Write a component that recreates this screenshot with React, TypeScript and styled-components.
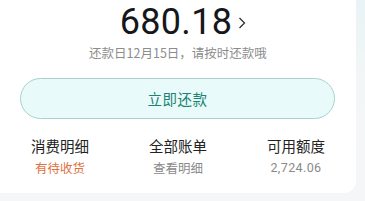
import styled, { createGlobalStyle } from 'styled-components';

const GlobalStyle = createGlobalStyle`
  html, body {
    margin: 0;
    padding: 0;
    background: linear-gradient(180deg, #e9f3f5 0%, #f3f6f7 40%, #f5f6f7 100%);
    font-family: "Noto Sans CJK SC", "Noto Sans", sans-serif;
  }
`;

const Page = styled.div`
  width: 365px;
  height: 201px;
  overflow: hidden;
`;

const Card = styled.div`
  width: 356px;
  height: 193px;
  background: #ffffff;
  border-radius: 0 0 12px 0;
  display: flex;
  flex-direction: column;
  align-items: center;
`;

const AmountRow = styled.div`
  display: flex;
  align-items: center;
  gap: 6px;
  margin-top: 2px;
  margin-left: 10px;
`;

const Amount = styled.span`
  font-family: Roboto, "Liberation Sans", sans-serif;
  font-size: 36px;
  line-height: 40px;
  font-weight: 400;
  color: #16171b;
  letter-spacing: 0.3px;
`;

const Due = styled.div`
  margin-top: 2px;
  font-size: 12.5px;
  line-height: 18px;
  color: #8c8c8c;
`;

const PayButton = styled.button`
  margin-top: 16px;
  width: 315px;
  height: 41px;
  margin-left: -1px;
  border-radius: 21px;
  border: 1px solid #a9d2cd;
  background: #e9fafa;
  color: #1a8472;
  font-family: "Noto Sans CJK SC", sans-serif;
  font-size: 14.5px;
  letter-spacing: 0.5px;
  padding: 0;
`;

const Stats = styled.div`
  margin-top: 17px;
  width: 354px;
  display: grid;
  grid-template-columns: repeat(3, 1fr);
`;

const Stat = styled.div`
  display: flex;
  flex-direction: column;
  align-items: center;
`;

const StatTitle = styled.div`
  font-size: 14.5px;
  line-height: 20px;
  color: #222222;
`;

const StatValue = styled.div<{ $accent?: boolean; $num?: boolean }>`
  font-size: 12.5px;
  line-height: 18px;
  margin-top: 3px;
  color: ${p => (p.$accent ? '#e0703f' : '#8a8a8a')};
  letter-spacing: ${p => (p.$num ? '0.4px' : '0')};
  font-family: ${p =>
    p.$num ? 'Roboto, "Liberation Sans", sans-serif' : '"Noto Sans CJK SC", sans-serif'};
`;

const Chevron = () => (
  <svg width="8" height="12" viewBox="0 0 8 12" style={{ marginTop: 2 }}>
    <path d="M1.5 1 L6.5 6 L1.5 11" fill="none" stroke="#2a2a2a" strokeWidth="1.2" />
  </svg>
);

export default function App() {
  return (
    <Page>
      <GlobalStyle />
      <Card>
        <AmountRow>
          <Amount>680.18</Amount>
          <Chevron />
        </AmountRow>
        <Due>还款日12月15日，请按时还款哦</Due>
        <PayButton>立即还款</PayButton>
        <Stats>
          <Stat>
            <StatTitle>消费明细</StatTitle>
            <StatValue $accent>有待收货</StatValue>
          </Stat>
          <Stat>
            <StatTitle>全部账单</StatTitle>
            <StatValue>查看明细</StatValue>
          </Stat>
          <Stat>
            <StatTitle>可用额度</StatTitle>
            <StatValue $num>2,724.06</StatValue>
          </Stat>
        </Stats>
      </Card>
    </Page>
  );
}
